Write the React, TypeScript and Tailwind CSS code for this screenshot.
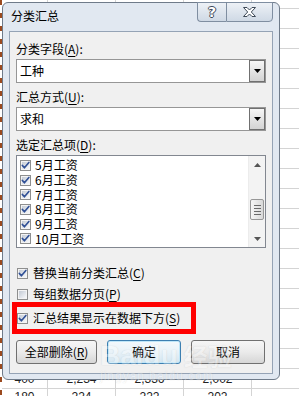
import React from "react";

function U({ children }: { children: React.ReactNode }) {
  return <span className="underline underline-offset-[2px] decoration-1">{children}</span>;
}

function Check({ checked = true }: { checked?: boolean }) {
  return (
    <svg width="11" height="11" viewBox="0 0 11 11" className="shrink-0 block">
      <defs>
        <linearGradient id="cbfill" x1="0" y1="0" x2="1" y2="1">
          <stop offset="0" stopColor="#c3cad4" />
          <stop offset="1" stopColor="#f7f8fa" />
        </linearGradient>
      </defs>
      <rect x="0.5" y="0.5" width="10" height="10" fill="#f4f4f4" stroke="#8e8f8f" />
      <rect x="2" y="2" width="7" height="7" fill="url(#cbfill)" />
      {checked && (
        <path
          d="M2.3 5.4 L4.4 7.8 L8.9 2.4"
          fill="none"
          stroke="#2f4f95"
          strokeWidth="1.6"
          strokeLinecap="round"
          strokeLinejoin="round"
        />
      )}
    </svg>
  );
}

function Combo({ value, className }: { value: string; className: string }) {
  return (
    <div className={`${className} ml-[6px] w-[250px] h-[24px] flex border border-[#969696] bg-white shrink-0`}>
      <div className="flex-1 pl-[3px] leading-[22px] text-[12px]">{value}</div>
      <div className="w-[16px] h-full border border-[#707070] bg-gradient-to-b from-[#f6f6f6] to-[#d3d3d3] flex items-center justify-center">
        <svg width="7" height="4" viewBox="0 0 7 4" className="block">
          <path d="M0 0H7L3.5 4Z" fill="#000" />
        </svg>
      </div>
    </div>
  );
}

function Scrollbar() {
  return (
    <div className="w-[17px] h-full flex flex-col bg-[#f3f3f3] border-l border-[#ececec]">
      <div className="h-[17px] flex items-center justify-center">
        <svg width="7" height="4" viewBox="0 0 7 4" className="block">
          <path d="M3.5 0L7 4H0Z" fill="#555" />
        </svg>
      </div>
      <div className="mt-[26px] ml-[1px] w-[14px] h-[21px] rounded-[2px] border border-[#979797] bg-gradient-to-r from-[#f6f6f6] to-[#d9d9d9] flex flex-col items-center justify-center gap-[2px]">
        <div className="w-[7px] h-[1px] bg-[#6a6a6a]" />
        <div className="w-[7px] h-[1px] bg-[#6a6a6a]" />
        <div className="w-[7px] h-[1px] bg-[#6a6a6a]" />
        <div className="w-[7px] h-[1px] bg-[#6a6a6a]" />
      </div>
      <div className="flex-1" />
      <div className="h-[17px] flex items-center justify-center">
        <svg width="7" height="4" viewBox="0 0 7 4" className="block">
          <path d="M0 0H7L3.5 4Z" fill="#555" />
        </svg>
      </div>
    </div>
  );
}

function CheckRow({
  checked,
  className,
  children,
}: {
  checked: boolean;
  className: string;
  children: React.ReactNode;
}) {
  return (
    <div className={`${className} ml-[7px] h-[16px] flex items-center gap-[5px] leading-[16px] shrink-0`}>
      <Check checked={checked} />
      <span>{children}</span>
    </div>
  );
}

function Sheet() {
  const data: Record<number, string[]> = {
    19: ["400", "2,234", "2,336", "2,002", ""],
    20: ["180", "224", "222", "202", ""],
  };
  const rows = Array.from({ length: 21 }, (_, i) => i);
  return (
    <div className="flex font-['Liberation_Sans',sans-serif] text-[12px] text-[#222]">
      <div className="w-[2px] h-[396px] shrink-0 bg-[repeating-linear-gradient(to_bottom,#9b4a1f_0px,#9b4a1f_5px,#ffffff_5px,#ffffff_13px)]" />
      <div className="grid grid-cols-[46px_68px_68px_68px_68px] shrink-0">
        {rows.map((r) =>
          [0, 1, 2, 3, 4].map((c) => (
            <div
              key={`${r}-${c}`}
              className={`${r === 0 ? "h-[9px]" : "h-[20px]"} ${
                r === 19 ? "leading-[21px]" : "leading-[16px]"
              } border-r border-b border-[#d4d4d4] text-center overflow-hidden`}
            >
              {data[r]?.[c]}
            </div>
          ))
        )}
      </div>
    </div>
  );
}

function Dialog() {
  const items = ["5月工资", "6月工资", "7月工资", "8月工资", "9月工资", "10月工资"];
  return (
    <div className="absolute left-[2px] top-[2px] w-[278px] h-[378px] rounded-[6px] border border-[#6f7b8a] bg-[#e1e8f1] px-[6px] pb-[5px] flex flex-col">
      <div className="h-[28px] flex items-start justify-between shrink-0">
        <div className="ml-[2px] mt-[5px] leading-[16px] text-[12px]">分类汇总</div>
        <div className="-mt-[1px] flex h-[20px]">
          <div className="w-[29px] h-full border border-r-0 border-[#7f8ea1] rounded-bl-[4px] bg-gradient-to-b from-[#edf1f6] to-[#cfd9e5] flex items-center justify-center">
            <span className="text-white font-bold text-[14px] leading-none font-['DejaVu_Sans',sans-serif] [text-shadow:1px_0_#3f4a58,-1px_0_#3f4a58,0_1px_#3f4a58,0_-1px_#3f4a58]">
              ?
            </span>
          </div>
          <div className="w-[47px] h-full border border-[#7f8ea1] rounded-br-[4px] bg-gradient-to-b from-[#edf1f6] to-[#cfd9e5] flex items-center justify-center">
            <svg width="13" height="10" viewBox="0 0 13 10" className="block">
              <path
                d="M0.5 0.5H4L6.5 3L9 0.5H12.5L8.3 5L12.5 9.5H9L6.5 7L4 9.5H0.5L4.7 5Z"
                fill="#ffffff"
                stroke="#3f4a58"
                strokeWidth="1"
                strokeLinejoin="round"
              />
            </svg>
          </div>
        </div>
      </div>
      <div className="flex-1 border border-[#95a3b5] bg-[#f0f0f0] flex flex-col">
        <div className="mt-[9px] ml-[6px] h-[16px] leading-[16px] shrink-0">
          分类字段(<U>A</U>):
        </div>
        <Combo value="工种" className="mt-[2px]" />
        <div className="mt-[6px] ml-[6px] h-[16px] leading-[16px] shrink-0">
          汇总方式(<U>U</U>):
        </div>
        <Combo value="求和" className="mt-[2px]" />
        <div className="mt-[6px] ml-[6px] h-[16px] leading-[16px] shrink-0">
          选定汇总项(<U>D</U>):
        </div>
        <div className="mt-[2px] ml-[6px] w-[250px] h-[93px] border border-[#828790] bg-white flex shrink-0 overflow-hidden">
          <div className="flex-1 pt-[2px] flex flex-col">
            {items.map((it) => (
              <div key={it} className="h-[14.7px] flex items-center gap-[4px] pl-[3px] shrink-0">
                <Check checked />
                <span className="leading-[14px]">{it}</span>
              </div>
            ))}
          </div>
          <Scrollbar />
        </div>
        <CheckRow checked className="mt-[17px]">
          替换当前分类汇总(<U>C</U>)
        </CheckRow>
        <CheckRow checked={false} className="mt-[5px]">
          每组数据分页(<U>P</U>)
        </CheckRow>
        <CheckRow checked className="mt-[8px]">
          汇总结果显示在数据下方(<U>S</U>)
        </CheckRow>
        <div className="mt-[14px] ml-[6px] flex h-[24px] shrink-0">
          <div className="w-[81px] h-full rounded-[3px] border border-[#707070] bg-gradient-to-b from-[#f6f6f6] via-[#ebebeb] to-[#d6d6d6] flex items-center justify-center leading-[16px]">
            全部删除(<U>R</U>)
          </div>
          <div className="ml-[10px] w-[74px] h-full rounded-[3px] border border-[#3c7fb1] shadow-[inset_0_0_0_1px_#bfe6f8] bg-gradient-to-b from-[#f4f9fc] via-[#e8f2f8] to-[#d4e6f1] flex items-center justify-center leading-[16px]">
            确定
          </div>
          <div className="ml-[10px] w-[74px] h-full rounded-[3px] border border-[#707070] bg-gradient-to-b from-[#f6f6f6] via-[#ebebeb] to-[#d6d6d6] flex items-center justify-center leading-[16px]">
            取消
          </div>
        </div>
      </div>
    </div>
  );
}

export default function App() {
  return (
    <div className="relative w-[299px] h-[396px] overflow-hidden bg-white font-['Microsoft_YaHei','Noto_Sans_CJK_SC',sans-serif] text-[12px] text-black">
      <Sheet />
      <Dialog />
      <div className="absolute left-[12px] top-[302px] w-[184px] h-[32px] border-[5px] border-[#ff0000]" />
      <div className="absolute left-[100px] top-[342px] pointer-events-none opacity-[0.3] flex flex-col items-start">
        <div className="flex items-end leading-[28px]">
          <span className="text-[28px] font-bold text-white font-['Liberation_Sans',sans-serif] [text-shadow:0_0_1px_#8a8a8a]">
            Baidu
          </span>
          <span className="ml-[6px] text-[24px] font-bold text-white font-['Noto_Sans_CJK_SC',sans-serif] [text-shadow:0_0_1px_#8a8a8a]">
            经验
          </span>
        </div>
        <span className="text-[12px] leading-[12px] tracking-[1px] text-white font-['Liberation_Sans',sans-serif] [text-shadow:0_0_1px_#8a8a8a]">
          jingyan.baidu.com
        </span>
      </div>
    </div>
  );
}
